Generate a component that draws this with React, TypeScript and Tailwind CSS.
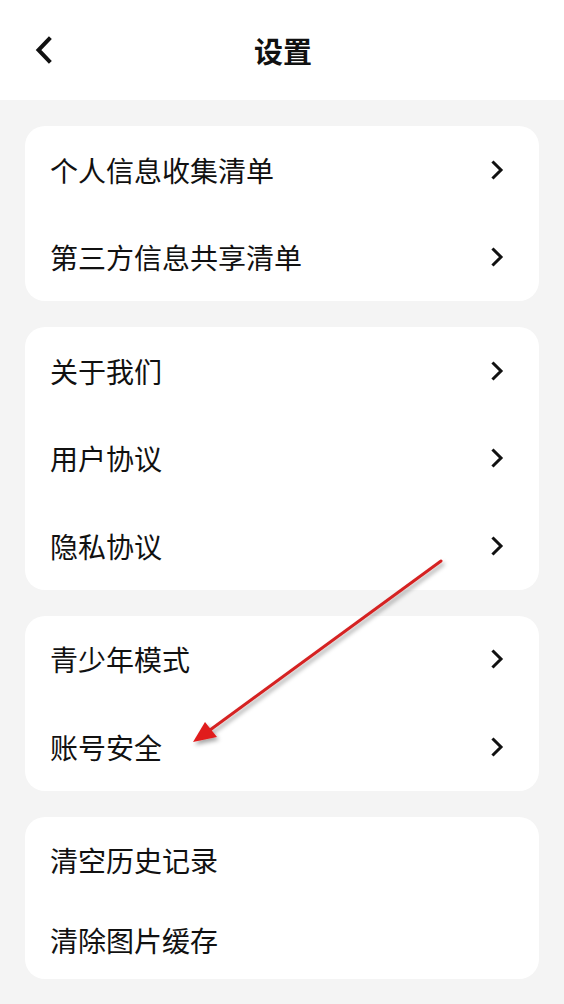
const groups: { label: string; arrow: boolean }[][] = [
  [
    { label: "个人信息收集清单", arrow: true },
    { label: "第三方信息共享清单", arrow: true },
  ],
  [
    { label: "关于我们", arrow: true },
    { label: "用户协议", arrow: true },
    { label: "隐私协议", arrow: true },
  ],
  [
    { label: "青少年模式", arrow: true },
    { label: "账号安全", arrow: true },
  ],
];

const lastGroup = ["清空历史记录", "清除图片缓存"];

function Chevron() {
  return (
    <svg width="14" height="20" viewBox="0 0 14 20" fill="none">
      <path d="M3.5 2.5 L11 10 L3.5 17.5" stroke="#111" strokeWidth="3" strokeLinecap="square" />
    </svg>
  );
}

export default function App() {
  return (
    <div
      className="relative w-[564px] h-[1004px] overflow-hidden bg-[#f4f4f4] text-[#111]"
      style={{ fontFamily: '"Noto Sans CJK SC", "Noto Sans", sans-serif' }}
    >
      <header className="h-[100px] bg-white relative flex items-center justify-center">
        <button className="absolute left-[33px] top-[36px]">
          <svg width="22" height="28" viewBox="0 0 22 28" fill="none">
            <path d="M16 3 L5.5 14 L16 25" stroke="#111" strokeWidth="4" strokeLinecap="square" />
          </svg>
        </button>
        <h1 className="text-[29px] font-bold leading-none pl-[2px]">设置</h1>
      </header>

      <div className="px-[25px] pt-[26px] flex flex-col gap-[26px]">
        {groups.map((g, gi) => (
          <div key={gi} className="bg-white rounded-[20px]">
            {g.map((item) => (
              <div key={item.label} className="h-[87.5px] flex items-center justify-between pl-[25px] pr-[35px]">
                <span className="text-[28px] leading-none">{item.label}</span>
                {item.arrow && <Chevron />}
              </div>
            ))}
          </div>
        ))}
        <div className="bg-white rounded-[20px] pt-[2px]">
          {lastGroup.map((label, i) => (
            <div
              key={label}
              className={`${i === 0 ? "h-[82px]" : "h-[78px]"} flex items-center pl-[25px]`}
            >
              <span className="text-[28px] leading-none">{label}</span>
            </div>
          ))}
        </div>
      </div>

      <svg className="absolute left-0 top-0 pointer-events-none" width="564" height="1004">
        <defs>
          <filter id="sh" x="-20%" y="-20%" width="140%" height="140%">
            <feDropShadow dx="2" dy="3" stdDeviation="2" floodColor="#000" floodOpacity="0.35" />
          </filter>
        </defs>
        <g filter="url(#sh)">
          <line x1="441" y1="561" x2="210" y2="730" stroke="#d52424" strokeWidth="3" strokeLinecap="round" />
          <polygon points="193,742 205,722 217,737" fill="#e01e1e" />
        </g>
      </svg>
    </div>
  );
}
